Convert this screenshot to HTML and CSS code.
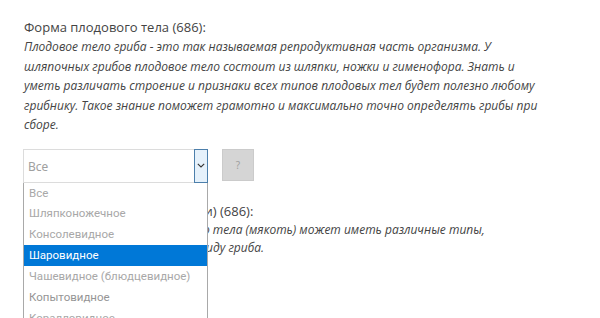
FILE: index.html
```html
<!DOCTYPE html>
<html lang="ru">
<head>
  <meta charset="UTF-8" />
  <title>Определитель грибов</title>
  <link rel="stylesheet" href="styles.css">
</head>
<body>
  <div class="container">
    <div class="field">
      <div class="field-title">Форма плодового тела (686):</div>
      <p class="field-desc">Плодовое тело гриба - это так называемая репродуктивная часть организма. У шляпочных грибов плодовое тело состоит из шляпки, ножки и гименофора. Знать и уметь различать строение и признаки всех типов плодовых тел будет полезно любому грибнику. Такое знание поможет грамотно и максимально точно определять грибы при сборе.</p>

      <div class="controls">
        <div class="select-wrap">
          <div class="select">
            <span class="select-value">Все</span>
            <span class="select-arrow">
              <svg width="8" height="5" viewBox="0 0 8 5"><path d="M0.8 0.8 L4 4 L7.2 0.8" fill="none" stroke="#333" stroke-width="1.1"/></svg>
            </span>
          </div>
          <ul class="dropdown">
            <li>Все</li>
            <li>Шляпконожечное</li>
            <li>Консолевидное</li>
            <li class="active">Шаровидное</li>
            <li>Чашевидное (блюдцевидное)</li>
            <li class="dark">Копытовидное</li>
            <li>Коралловидное</li>
          </ul>
        </div>
        <button class="help" type="button">?</button>
      </div>
    </div>

    <div class="field">
      <div class="field-title">Тип мякоти (по консистенции) (686):</div>
      <p class="field-desc">Общая консистенция плодового тела (мякоть) может иметь различные типы, характерные тому или иному виду гриба.</p>
    </div>
  </div>
</body>
</html>
```

FILE: styles.css
```css
html, body {
  min-height: 100%;
}

body {
  margin: 0;
  min-height: 318px;
  background: #fff;
  font-family: 'Open Sans', sans-serif;
  color: #444;
}

.container {
  padding: 17px 0 0 24px;
  width: 524px;
}

.field-title {
  font-size: 13px;
  line-height: 20px;
}

.field-desc {
  margin: 0;
  font-size: 12px;
  line-height: 19.5px;
  font-style: italic;
}

.field + .field .field-desc {
  line-height: 18px;
}

.field + .field .field-title {
  line-height: 19px;
}

.controls {
  display: flex;
  align-items: flex-start;
  gap: 14px;
  margin: 14px 0 19px -1px;
}

.select-wrap {
  position: relative;
}

.select {
  display: flex;
  width: 185px;
  height: 34px;
  box-sizing: border-box;
  border: 1px solid #dcdcdc;
  font-family: 'Noto Sans', sans-serif;
  font-size: 12px;
  color: #a0a0a0;
}

.select-value {
  flex: 1;
  padding: 8px 0 0 4px;
}

.select-arrow {
  width: 12px;
  margin: -1px -1px -1px 0;
  border: 1px solid #4c7fab;
  background: #e5f1fb;
  display: flex;
  align-items: center;
  justify-content: center;
}

.dropdown {
  position: absolute;
  z-index: 5;
  top: 34px;
  left: 0;
  width: 183px;
  margin: 0;
  padding: 0;
  list-style: none;
  background: #fff;
  border-left: 1px solid #a9a9a9;
  border-right: 1px solid #a9a9a9;
  font-family: Roboto, sans-serif;
  font-size: 11.5px;
  color: #a8a8a8;
}

.dropdown li {
  height: 20.9px;
  line-height: 20.9px;
  padding-left: 5px;
}

.dropdown li.active {
  background: #0078d7;
  color: #fff;
}

.dropdown li.dark {
  color: #959595;
}

.help {
  width: 32px;
  height: 32px;
  padding: 0;
  background: #d5d5d5;
  border: 1px solid #cbcbcb;
  color: #a0a0a0;
  font-family: 'Noto Sans', sans-serif;
  font-size: 10px;
}
```
